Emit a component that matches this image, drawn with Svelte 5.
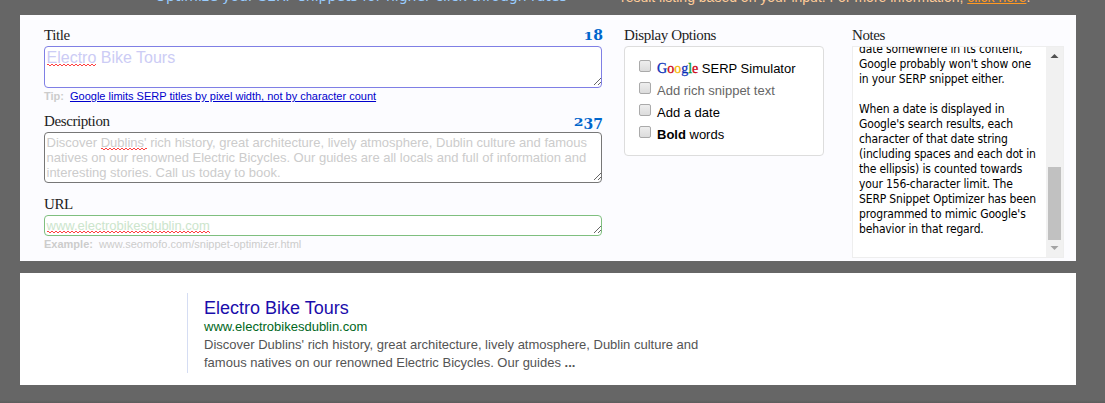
<script>
  const options = ['serp', 'rich', 'date', 'bold'];
  const google = [
    ['G', '#0a2fb8'], ['o', '#cc0010'], ['o', '#f5b400'],
    ['g', '#0a2fb8'], ['l', '#109a30'], ['e', '#cc0010']
  ];
</script>

{#snippet grip()}
  <svg class="grip" width="8" height="8" viewBox="0 0 8 8" shape-rendering="crispEdges">
    <path d="M0.5 7.5L7.5 0.5M4.5 7.5L7.5 4.5" stroke="#666" fill="none" />
  </svg>
{/snippet}

<div class="page">
  <header>
    <p class="tagline">Optimize your SERP snippets for higher click-through rates</p>
    <p class="intro">result listing based on your input. For more information, <span class="here">click here</span>.</p>
  </header>

  <main class="editor">
    <section class="fields">
      <div class="label"><span>Title</span><b class="count"><i class="small">1</i>8</b></div>
      <div class="input title"><span class="typo">Electro</span> Bike Tours{@render grip()}</div>
      <div class="hint"><b>Tip:</b><span class="link">Google limits SERP titles by pixel width, not by character count</span></div>

      <div class="label second"><span>Description</span><b class="count"><i class="small">2</i><i class="low">3</i><i class="low">7</i></b></div>
      <div class="input description">Discover <span class="typo">Dublins'</span> rich history, great architecture, lively atmosphere, Dublin culture and famous<br />natives on our renowned Electric Bicycles. Our guides are all locals and full of information and<br />interesting stories. Call us today to book.{@render grip()}</div>

      <div class="label third"><span>URL</span></div>
      <div class="input url"><span class="typo">www.electrobikesdublin.com</span>{@render grip()}</div>
      <div class="hint"><b>Example:</b><span>www.seomofo.com/snippet-optimizer.html</span></div>
    </section>

    <section class="display">
      <div class="label"><span>Display Options</span></div>
      <div class="options">
        {#each options as o}
          <div class="option">
            <span class="box"></span>
            {#if o === 'serp'}
              <span><span class="google">{#each google as [ch, color]}<span style="color:{color}">{ch}</span>{/each}</span> SERP Simulator</span>
            {:else if o === 'rich'}
              <span class="muted">Add rich snippet text</span>
            {:else if o === 'date'}
              <span>Add a date</span>
            {:else}
              <span><b>Bold</b> words</span>
            {/if}
          </div>
        {/each}
      </div>
    </section>

    <section class="notes">
      <div class="label"><span>Notes</span></div>
      <div class="scroller">
        <div class="text">
          <p>date somewhere in its content,<br />Google probably won't show one<br />in your SERP snippet either.</p>
          <p>When a date is displayed in<br />Google's search results, each<br />character of that date string<br />(including spaces and each dot in<br />the ellipsis) is counted towards<br />your 156-character limit. The<br />SERP Snippet Optimizer has been<br />programmed to mimic Google's<br />behavior in that regard.</p>
        </div>
        <div class="bar">
          <svg width="17" height="17" viewBox="0 0 17 17"><path d="M4.5 11L8.5 7L12.5 11Z" fill="#505050" /></svg>
          <span class="thumb"></span>
          <svg width="17" height="17" viewBox="0 0 17 17"><path d="M4.5 6L8.5 10L12.5 6Z" fill="#a3a3a3" /></svg>
        </div>
      </div>
    </section>
  </main>

  <section class="preview">
    <div class="result">
      <h3>Electro Bike Tours</h3>
      <cite>www.electrobikesdublin.com</cite>
      <p>Discover Dublins' rich history, great architecture, lively atmosphere, Dublin culture and<br />famous natives on our renowned Electric Bicycles. Our guides <b>...</b></p>
    </div>
  </section>
</div>

<style>
  :global(body) { background: #666; }
  p, h3 { margin: 0; }
  .page {
    box-sizing: border-box;
    width: 1105px;
    height: 403px;
    padding: 0 29px 0 20px;
    overflow: hidden;
    background: linear-gradient(#666 400px, #5c5c5c 403px);
    font: 13px 'Liberation Sans', Arial, sans-serif;
    color: #000;
  }
  header {
    display: grid;
    grid-template-columns: 466px 1fr;
    padding-left: 135px;
    height: 15px;
    white-space: nowrap;
  }
  .tagline { font: 14px/16px 'DejaVu Sans', sans-serif; color: #99ccff; margin-top: -12px; }
  .intro { font-size: 14px; line-height: 16px; color: #ffcc99; margin-top: -11px; }
  .here { color: #ff9922; text-decoration: underline; }

  .editor {
    box-sizing: border-box;
    display: grid;
    grid-template-columns: 558px 200px 212px;
    column-gap: 22px;
    height: 246px;
    padding: 13px 12px 0 24px;
    background: #fcfcff;
  }
  .notes { margin-left: 6px; width: 212px; }
  .label {
    display: flex;
    justify-content: space-between;
    height: 18px;
    font: 15px/14px 'Liberation Serif', serif;
    letter-spacing: -0.4px;
    color: #222;
    white-space: nowrap;
  }
  .second { margin-top: 10px; }
  .third { margin-top: 14px; }
  .count { margin-right: -1px; font: bold 14px/14px 'DejaVu Serif', serif; letter-spacing: 0; color: #0066cc; }
  .count i { display: inline-block; font-style: normal; }
  .small { transform: scaleY(0.77); transform-origin: 0 12px; }
  .low { transform: translateY(3px); }

  .input {
    box-sizing: border-box;
    position: relative;
    border: 1px solid;
    border-radius: 4px;
    padding: 2px 2px 2px 1.5px;
    background: #fff;
    line-height: 15px;
    white-space: nowrap;
  }
  .title { height: 42px; font-size: 16px; line-height: 18px; color: #ccccf5; border-color: #7f7fe5; }
  .description { height: 51px; color: #ccc; border-color: #777; }
  .url { height: 21px; color: #cce5cc; border-color: #7fbf7f; }
  .grip { position: absolute; right: 0; bottom: 1px; }
  .typo { position: relative; }
  .typo::after {
    content: '';
    position: absolute;
    left: 0;
    right: 0;
    bottom: 0;
    height: 2px;
    background:
      repeating-linear-gradient(90deg, #ff4040 0 2px, transparent 2px 4px) 0 0 / 100% 1px no-repeat,
      repeating-linear-gradient(90deg, transparent 0 2px, #ff4040 2px 4px) 0 1px / 100% 1px no-repeat;
  }
  .hint { height: 16px; font-size: 11px; line-height: 16px; color: #ccc; white-space: nowrap; }
  .hint b { margin-right: 6px; }
  .link { color: #0000cc; text-decoration: underline; }

  .options {
    box-sizing: border-box;
    height: 110px;
    padding: 11px 14px;
    border: 1px solid #ddd;
    border-radius: 4px;
    background: #fff;
  }
  .option { display: flex; height: 22px; line-height: 22px; white-space: nowrap; }
  .box {
    box-sizing: border-box;
    width: 12px;
    height: 12px;
    margin: 2px 6px 0 0;
    border: 1px solid #aaa;
    border-radius: 2px;
    background: linear-gradient(#eee, #dcdcdc);
  }
  .google { font: 14px/14px 'Liberation Serif', serif; -webkit-text-stroke: 0.3px; }
  .muted { color: #666; }

  .scroller {
    box-sizing: border-box;
    display: flex;
    justify-content: space-between;
    height: 212px;
    border: 1px solid #eee;
    background: #fff;
    overflow: hidden;
  }
  .text {
    margin: -5px 0 0 6px;
    font: 12px/15px 'DejaVu Sans Condensed', 'DejaVu Sans', sans-serif;
    letter-spacing: -0.15px;
    white-space: nowrap;
  }
  .text p + p { margin-top: 15px; }
  .bar { display: flex; flex-direction: column; width: 17px; background: #f1f1f1; }
  .thumb { height: 73px; margin: auto 2px 0; background: #c1c1c1; }

  .preview {
    box-sizing: border-box;
    height: 112px;
    margin-top: 12px;
    padding: 20px 0 0 167px;
    background: #fff;
  }
  .result {
    box-sizing: border-box;
    height: 80px;
    padding: 4px 0 0 16px;
    border-left: 1px solid #d5ddf3;
    line-height: 18px;
    color: #545454;
  }
  h3 { font-size: 18px; font-weight: normal; line-height: 22px; color: #1a0dab; }
  cite { display: block; margin-bottom: 1px; font-style: normal; line-height: 16px; color: #006621; }
</style>
